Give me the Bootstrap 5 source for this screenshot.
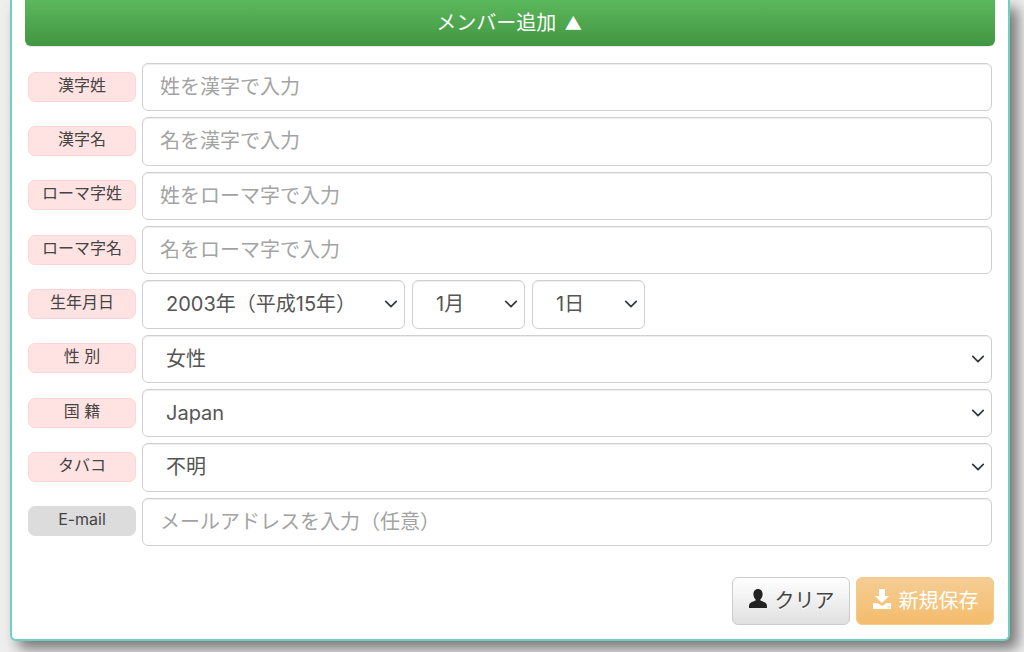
<!DOCTYPE html>
<html lang="ja">
<head>
<meta charset="utf-8">
<title>メンバー追加</title>
<link href="https://cdn.jsdelivr.net/npm/bootstrap@5.3.0/dist/css/bootstrap.min.css" rel="stylesheet">
<style>
html,body{height:652px;overflow:hidden}
body{background:#eee;font-family:Inter,"Noto Sans CJK JP",sans-serif;color:#555}
.sheet{margin:0 14px 0 10px;height:641px;background:#fff;border:2px solid #6fcfc6;border-top:0;border-radius:0 0 6px 6px;box-shadow:8px 8px 14px rgba(0,0,0,.5);padding:0 13px}
.toggle-bar{height:46px;font-size:20px;line-height:44px;padding:0 2px 0 0;color:#fff;border:0;border-radius:0 0 6px 6px;background:linear-gradient(#5cb85c,#419641);box-shadow:0 1px 1px rgba(0,0,0,.1)}
.tri{font-family:"Noto Sans CJK JP",sans-serif;font-size:17px;margin-left:3px}
.fields{margin-top:17px;padding-right:3px}
.field-row{height:48.33px;margin-bottom:6px;padding-left:3px}
.tag{flex:0 0 108px;height:30px;margin:8.6px 6px 0 0;border-radius:7px;font-size:16px;line-height:25px;text-align:center;color:#444;background:#ffe3e3;border:1px solid #ffd4d4}
.tag-opt{background:#dcdcdc;border-color:#dcdcdc}
.field-row .form-control,.field-row .form-select{height:48.33px;font-size:20px;color:#555;border:1px solid #d0d0d0;border-radius:6px;box-shadow:inset 0 1px 1px rgba(0,0,0,.075)}
.field-row .form-control{padding:0 17px}
.field-row .form-control::placeholder{color:#a3a3a3}
.field-row .form-select{padding:0 30px 0 23px;background-position:right 4px center;background-size:18px 14px}
.date-set{gap:7px}
.sel-year{flex:0 0 263px;width:263px}
.sel-md{flex:0 0 113px;width:113px}
.actions{margin-top:30.6px;gap:6px;padding-right:1px}
.act{height:48px;font-size:20px;line-height:46px;padding:0;border-radius:6px}
.act svg{vertical-align:-1px;margin-right:7px}
.act-clear{width:118px;color:#444;border:1px solid #ccc;background:linear-gradient(#fff,#e0e0e0);text-shadow:0 1px 0 #fff}
.act-save{width:138px;color:#fff;border:1px solid #f5c98a;background:linear-gradient(#f5cd94,#f4bc6c)}
.act-clear:hover{color:#444}
</style>
</head>
<body>
<div class="sheet">
  <button type="button" class="btn w-100 d-block toggle-bar">メンバー追加 <span class="tri">▲</span></button>
  <form class="fields">
    <div class="d-flex field-row"><span class="tag">漢字姓</span><input class="form-control" placeholder="姓を漢字で入力"></div>
    <div class="d-flex field-row"><span class="tag">漢字名</span><input class="form-control" placeholder="名を漢字で入力"></div>
    <div class="d-flex field-row"><span class="tag">ローマ字姓</span><input class="form-control" placeholder="姓をローマ字で入力"></div>
    <div class="d-flex field-row"><span class="tag">ローマ字名</span><input class="form-control" placeholder="名をローマ字で入力"></div>
    <div class="d-flex field-row"><span class="tag">生年月日</span>
      <div class="d-flex date-set">
        <select class="form-select sel-year"><option>2003年（平成15年）</option></select>
        <select class="form-select sel-md"><option>1月</option></select>
        <select class="form-select sel-md"><option>1日</option></select>
      </div>
    </div>
    <div class="d-flex field-row"><span class="tag">性 別</span><select class="form-select"><option>女性</option></select></div>
    <div class="d-flex field-row"><span class="tag">国 籍</span><select class="form-select"><option>Japan</option></select></div>
    <div class="d-flex field-row"><span class="tag">タバコ</span><select class="form-select"><option>不明</option></select></div>
    <div class="d-flex field-row"><span class="tag tag-opt">E-mail</span><input class="form-control" placeholder="メールアドレスを入力（任意）"></div>
  </form>
  <div class="d-flex justify-content-end actions">
    <button type="button" class="btn act act-clear"><svg width="20" height="20" viewBox="0 0 20 20"><path fill="#222" d="M10 0c3 0 4.600 2.300 4.600 5.200 0 2-.8 3.800-2 5-.5.600-.3 1.300.4 1.600 1.500.6 4.500 1.400 5.500 3.100.5.900.5 2.500.5 4.100H1c0-1.600 0-3.200.5-4.100 1-1.700 4-2.500 5.500-3.100.7-.3.900-1 .4-1.600-1.200-1.200-2-3-2-5C5.400 2.300 7 0 10 0z"/></svg>クリア</button>
    <button type="button" class="btn act act-save"><svg width="20" height="20" viewBox="0 0 20 20"><path fill="#fff" d="M7 0h6v7h4l-7 7-7-7h4z"/><path fill="#fff" fill-rule="evenodd" d="M1 14h4.500l4.500 3 4.500-3H19v6H1zm14.500 3.500v1h2v-1z"/></svg>新規保存</button>
  </div>
</div>
<script src="https://cdn.jsdelivr.net/npm/bootstrap@5.3.0/dist/js/bootstrap.bundle.min.js"></script>
</body>
</html>
